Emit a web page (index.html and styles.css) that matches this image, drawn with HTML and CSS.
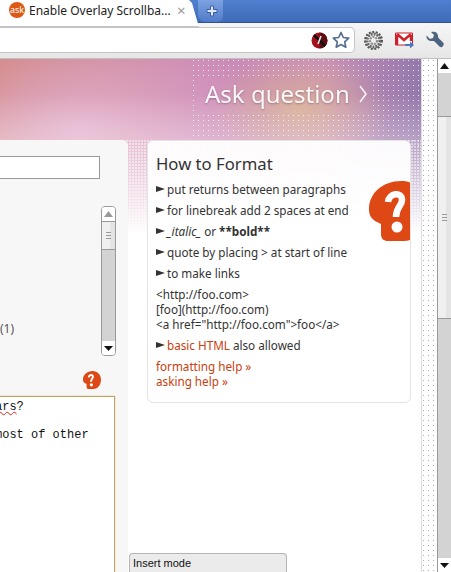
FILE: index.html
```html
<!DOCTYPE html>
<html lang="en">
<head>
<meta charset="UTF-8" />
<title>Enable Overlay Scrollbars</title>
<link rel="stylesheet" href="styles.css">
</head>
<body>

<!-- shared help mark -->
<svg class="defs" width="0" height="0">
  <symbol id="ask-mark" viewBox="0 0 60 60">
    <path d="M32 0C14 0 0 12 0 28c0 6 2 9 6 12l6 3v10c0 5 3 7 7 7h16c14 0 25-14 25-31C60 13 48 0 32 0z" fill="#dd4814"/>
    <path d="M19 21C20 12 33 10 33 19c0 6-6 7-6 17" fill="none" stroke="#fff" stroke-width="6.500"/>
    <circle cx="28" cy="46" r="5.500" fill="#fff"/>
  </symbol>
</svg>

<!-- TAB STRIP -->
<div class="tabstrip">
  <div class="tab">
    <span class="favicon">ask</span>
    <span class="tab-title">Enable Overlay Scrollba...</span>
    <span class="tab-close">×</span>
  </div>
  <div class="new-tab">
    <svg width="12" height="12" viewBox="0 0 12 12"><path d="M4.500 1h3v3.500h3.500v3h-3.500v3.500h-3v-3.500h-3.500v-3h3.500z" fill="#dfe7f6" stroke="#3a5f9f" stroke-width="1"/></svg>
  </div>
</div>

<!-- TOOLBAR -->
<div class="toolbar">
  <div class="omnibox">
    <svg class="blocked" width="17" height="17" viewBox="0 0 17 17"><circle cx="8.500" cy="8.500" r="8" fill="#a5121c"/><path d="M8.500 .5a8 8 0 0 1 0 16z" fill="#5e0d12"/><path d="M3 3l11 11" stroke="#111" stroke-width="2.500"/><path d="M10 4l-3 8" stroke="#eee" stroke-width="1.500"/></svg>
    <svg width="18" height="18" viewBox="0 0 18 18"><path d="M9 1.500l2.300 5 5.400.6-4 3.700 1.100 5.400-4.800-2.700-4.800 2.700 1.100-5.400-4-3.700 5.400-.6z" fill="#fff" stroke="#56708f" stroke-width="1.700" stroke-linejoin="round"/></svg>
  </div>
  <div class="toolbar-icons">
    <svg width="19" height="19" viewBox="0 0 19 19"><circle cx="9.500" cy="9.500" r="6.500" fill="none" stroke="#6a6a6a" stroke-width="3" stroke-dasharray="2 1"/><circle cx="9.500" cy="9.500" r="8.500" fill="none" stroke="#555" stroke-width="2" stroke-dasharray="2 1.500"/><circle cx="9.500" cy="9.500" r="3.500" fill="none" stroke="#888" stroke-width="2" stroke-dasharray="2 1"/></svg>
    <svg width="19" height="17" viewBox="0 0 19 17"><path d="M.5 1h17v12h-17z" fill="#fff" stroke="#c8202a"/><path d="M2 3v10M16 3v6M2 2l7 6 7-6" fill="none" stroke="#d0222c" stroke-width="2.500"/><path d="M10 12h5v-2.500l4 3.500-4 3.500v-2.500h-5z" fill="#4a78c0"/></svg>
    <svg width="18" height="18" viewBox="0 0 18 18"><path d="M1 5l3 3 3-1 1-3-3-3c3-1 7 0 7 4 0 1 0 1.500 1 2.500l4 4c1 1 1 2 0 3.500s-2.500 1.500-3.500.5l-5-5c-1-.7-1.500-.5-2.500-.5-3.500 0-6-2-5.500-5.500z" fill="#4d6480"/></svg>
  </div>
</div>

<!-- PAGE -->
<div class="page">
  <div class="content">
    <div class="banner">
      <a class="ask-btn">Ask question
        <svg class="ask-arrow" width="10" height="18" viewBox="0 0 10 18"><path d="M2 1l6 8-6 8" fill="none" stroke="#fff" stroke-width="1.500"/></svg>
      </a>
    </div>
    <div class="columns">
      <div class="main-card">
        <div class="title-input"></div>
        <div class="tag-row">
          <div class="tag-count">(1)</div>
          <div class="mini-scroll">
            <div class="sb-btn">
              <svg width="9" height="6" viewBox="0 0 9 6"><path d="M4.500 0l4.500 6h-9z" fill="#999"/></svg>
            </div>
            <div class="sb-thumb"><span class="grip"></span></div>
            <div class="sb-track"></div>
            <div class="sb-btn">
              <svg width="9" height="5" viewBox="0 0 9 5"><path d="M0 0h9l-4.500 5z" fill="#111"/></svg>
            </div>
          </div>
        </div>
        <div class="help-row">
          <svg width="18" height="18"><use href="#ask-mark"/></svg>
        </div>
        <div class="editor">
<pre class="editor-text"><span class="misspelt">ars</span>?

most of other</pre>
        </div>
      </div>

      <aside class="format-card">
        <svg class="format-mark" width="60" height="60"><use href="#ask-mark"/></svg>
        <h2 class="format-title">How to Format</h2>
        <p class="tip">put returns between paragraphs</p>
        <p class="tip">for linebreak add 2 spaces at end</p>
        <p class="tip"><i>_italic_</i> or <b>**bold**</b></p>
        <p class="tip">quote by placing &gt; at start of line</p>
        <p class="tip">to make links</p>
        <p class="sample">&lt;http://foo.com&gt;<br>[foo](http://foo.com)<br>&lt;a href="http://foo.com"&gt;foo&lt;/a&gt;</p>
        <p class="tip"><a class="link">basic HTML</a> also allowed</p>
        <p class="help-links"><a class="link">formatting help »</a><br><a class="link">asking help »</a></p>
      </aside>
    </div>
    <div class="status-bubble">Insert mode</div>
  </div>

  <div class="dot-band"></div>

  <div class="scrollbar">
    <div class="sb-btn">
      <svg width="9" height="6" viewBox="0 0 9 6"><path d="M4.500 0l4.500 6h-9z" fill="#111"/></svg>
    </div>
    <div class="sb-track short"></div>
    <div class="sb-thumb long"><span class="grip"></span></div>
    <div class="sb-track"></div>
    <div class="sb-btn">
      <svg width="9" height="5" viewBox="0 0 9 5"><path d="M0 0h9l-4.500 5z" fill="#111"/></svg>
    </div>
  </div>
</div>

</body>
</html>
```

FILE: styles.css
```css
* {
  box-sizing: border-box;
}
html, body {
  height: 100%;
}
body {
  margin: 0;
  overflow: hidden;
  display: flex;
  flex-direction: column;
  font-family: "Noto Sans", "Open Sans", sans-serif;
  background: #fff;
  color: #333;
}
.defs {
  display: none;
}

/* Tab strip */
.tabstrip {
  height: 23px;
  flex: none;
  display: flex;
  align-items: flex-start;
  background: linear-gradient(#4f7fd0, #3f6cb8);
  border-bottom: 1px solid #2f5590;
  position: relative;
  z-index: 2;
}
.tab {
  width: 199px;
  height: 27px;
  display: flex;
  align-items: center;
  padding: 0 0 6px 9px;
  background: #fff;
  border-bottom: 1px solid #c4c4c4;
  clip-path: polygon(0 0, 189px 0, 192px 3px, 199px 27px, 0 27px);
}
.favicon {
  width: 16px;
  height: 16px;
  flex: none;
  border-radius: 50%;
  background: #dc5a16;
  color: #fff;
  font-size: 9px;
  line-height: 15px;
  text-align: center;
}
.tab-title {
  width: 147px;
  margin-left: 4px;
  font-size: 12px;
  white-space: nowrap;
  color: #222;
}
.tab-close {
  margin-left: 1px;
  color: #999;
  font-size: 15px;
}
.new-tab {
  width: 25px;
  height: 22px;
  margin-left: -1px;
  display: flex;
  align-items: center;
  justify-content: center;
  padding: 0 0 1px 2px;
  background: linear-gradient(#7ea2e2, #4f7cc8);
  border-bottom-right-radius: 6px;
  border-bottom-left-radius: 8px;
}

/* Toolbar */
.toolbar {
  height: 36px;
  flex: none;
  display: flex;
  padding-top: 4px;
  background: linear-gradient(#f6f6f6, #e6e6e6);
  border-bottom: 1px solid #c0c0c0;
}
.omnibox {
  width: 355px;
  height: 26px;
  flex: none;
  display: flex;
  align-items: center;
  justify-content: flex-end;
  gap: 4px;
  padding-right: 4px;
  background: #fff;
  border: 1px solid #c4c4c4;
  border-left: none;
  border-radius: 0 5px 5px 0;
}
.toolbar-icons {
  flex: 1;
  height: 26px;
  display: flex;
  align-items: center;
  gap: 12px;
  padding-left: 9px;
}

/* Page */
.page {
  flex: 1;
  min-height: 0;
  display: flex;
}
.content {
  width: 421px;
  flex: none;
  position: relative;
  overflow: hidden;
  background:
    linear-gradient(rgba(255,255,255,0) 20%, rgba(255,255,255,.35) 50%, #fff 100%) 0 0 / 100% 175px no-repeat,
    radial-gradient(ellipse 90px 60px at 300px 50px, #d8ae98, rgba(216,174,152,0) 100%) 0 0 / 100% 175px no-repeat,
    linear-gradient(90deg, rgba(154,112,168,0) 78%, #9478ac 100%) 0 0 / 100% 175px no-repeat,
    radial-gradient(ellipse 190px 110px at 80px 70px, #e3b0cc, rgba(227,176,204,0) 100%) 0 0 / 100% 175px no-repeat,
    linear-gradient(100deg, #cf8278 0, #cc8ab6 45%, #c490b8 100%) 0 0 / 100% 175px no-repeat;
}
/* halftone dots behind the banner, with a hole for the button */
.content::before {
  content: "";
  position: absolute;
  top: 0;
  left: 192px;
  right: 0;
  height: 90px;
  background: radial-gradient(circle at 1.500px 1.500px, rgba(255,255,255,.8) .7px, transparent 1px) 0 0 / 5px 5px;
  -webkit-mask:
    linear-gradient(#000 0 0) 0 0 / 100% 19px no-repeat,
    linear-gradient(#000 0 0) 0 0 / 5px 100% no-repeat,
    linear-gradient(#000 0 0) 180px 0 / 100% 100% no-repeat,
    linear-gradient(#000 0 0) 0 53px / 100% 100% no-repeat;
  mask:
    linear-gradient(#000 0 0) 0 0 / 100% 19px no-repeat,
    linear-gradient(#000 0 0) 0 0 / 5px 100% no-repeat,
    linear-gradient(#000 0 0) 180px 0 / 100% 100% no-repeat,
    linear-gradient(#000 0 0) 0 53px / 100% 100% no-repeat;
}
.content::after {
  content: "";
  position: absolute;
  top: 81px;
  left: 0;
  right: 0;
  height: 90px;
  background: radial-gradient(circle at 1px 1px, rgba(255,255,255,.5) .8px, transparent 1px) 0 0 / 3px 3px;
}
.banner {
  height: 81px;
  display: flex;
  align-items: flex-start;
  padding: 17px 0 0 205px;
  position: relative;
  z-index: 1;
}
.ask-btn {
  height: 34px;
  display: flex;
  align-items: center;
  gap: 8px;
  font-size: 24px;
  line-height: 33px;
  color: #fff;
  opacity: .92;
  white-space: nowrap;
  text-shadow: 0 1px 2px rgba(90,60,90,.5);
}
.ask-arrow {
  margin-top: 1px;
}
.columns {
  display: flex;
  align-items: flex-start;
  gap: 19px;
  position: relative;
  z-index: 1;
}

/* Left card */
.main-card {
  width: 128px;
  height: 432px;
  flex: none;
  padding-top: 16px;
  background: #f7f7f7;
  border-top-right-radius: 6px;
}
.title-input {
  width: 100px;
  height: 23px;
  background: #fff;
  border: 1px solid #999;
  border-left: none;
}
.tag-row {
  display: flex;
  justify-content: flex-end;
  align-items: flex-end;
  width: 116px;
  margin-top: 27px;
}
.tag-count {
  flex: 1;
  font-size: 12px;
  line-height: 16px;
  padding-bottom: 19px;
  color: #555;
}
.mini-scroll {
  width: 15px;
  height: 150px;
  display: flex;
  flex-direction: column;
  border: 1px solid #999;
  border-radius: 4px;
  overflow: hidden;
}
.sb-btn {
  height: 14px;
  flex: none;
  display: flex;
  align-items: center;
  justify-content: center;
  background: #fff;
}
.sb-thumb {
  height: 29px;
  flex: none;
  display: flex;
  align-items: center;
  justify-content: center;
  background: linear-gradient(90deg, #f0f0f0 60%, #e4e4e4 60%);
  border-top: 1px solid #999;
  border-bottom: 1px solid #999;
}
.sb-thumb.long {
  height: 203px;
}
.sb-track {
  flex: 1;
  background: #d3d3d3;
}
.sb-track.short {
  flex: none;
  height: 43px;
}
.grip {
  width: 5px;
  height: 7px;
  border-top: 1px solid #999;
  border-bottom: 1px solid #999;
  background: linear-gradient(#999, #999) 0 2px / 5px 1px no-repeat;
}
.help-row {
  width: 101px;
  margin-top: 15px;
  display: flex;
  justify-content: flex-end;
}
.help-row svg {
  display: block;
}
.editor {
  width: 115px;
  height: 180px;
  margin-top: 7px;
  background: #fff;
  border: 1px solid #c8a060;
  border-left: none;
  box-shadow: 0 0 1px #c8a060;
  overflow: hidden;
}
.editor-text {
  margin: 0 0 0 -5px;
  padding: 3px 0 0;
  font-family: "Liberation Mono", monospace;
  font-size: 12px;
  line-height: 14px;
  color: #111;
}
.misspelt {
  text-decoration: underline wavy #d22;
  text-decoration-thickness: 1px;
}

/* How to Format */
.format-card {
  width: 264px;
  height: 263px;
  flex: none;
  position: relative;
  overflow: hidden;
  padding: 12px 8px 0;
  background: rgba(255,255,255,.93);
  border: 1px solid #e4e4e4;
  border-radius: 6px;
  font-size: 11.700px;
  line-height: 15px;
}
.format-mark {
  position: absolute;
  top: 40px;
  left: 221px;
}
.format-title {
  margin: 0 0 7px;
  font-size: 16.700px;
  font-weight: 400;
  line-height: 22px;
  color: #333;
}
.tip {
  margin: 0 0 6px;
  padding-left: 11px;
  position: relative;
}
.tip::before {
  content: "";
  position: absolute;
  left: 0;
  top: 4px;
  border-left: 9px solid #333;
  border-top: 3.500px solid transparent;
  border-bottom: 3.500px solid transparent;
}
.sample {
  margin: 0 0 6px;
}
.help-links {
  margin: 0;
}
.link {
  color: #c8400e;
}
.status-bubble {
  position: absolute;
  left: 129px;
  bottom: 0;
  width: 158px;
  height: 19px;
  padding-left: 3px;
  font-family: "Liberation Sans", sans-serif;
  font-size: 11px;
  line-height: 18px;
  color: #111;
  background: #ebebeb;
  border: 1px solid #b4b4b4;
  border-bottom: none;
  border-radius: 4px 4px 0 0;
  z-index: 2;
}

/* Window scrollbar */
.dot-band {
  width: 16px;
  flex: none;
  border-left: 1px solid #ddd;
  background: radial-gradient(circle at 1.500px 1.500px, #aaa .8px, transparent 1px) 0 0 / 5px 5px #fff;
}
.scrollbar {
  flex: 1;
  display: flex;
  flex-direction: column;
  border-left: 1px solid #999;
}
```
